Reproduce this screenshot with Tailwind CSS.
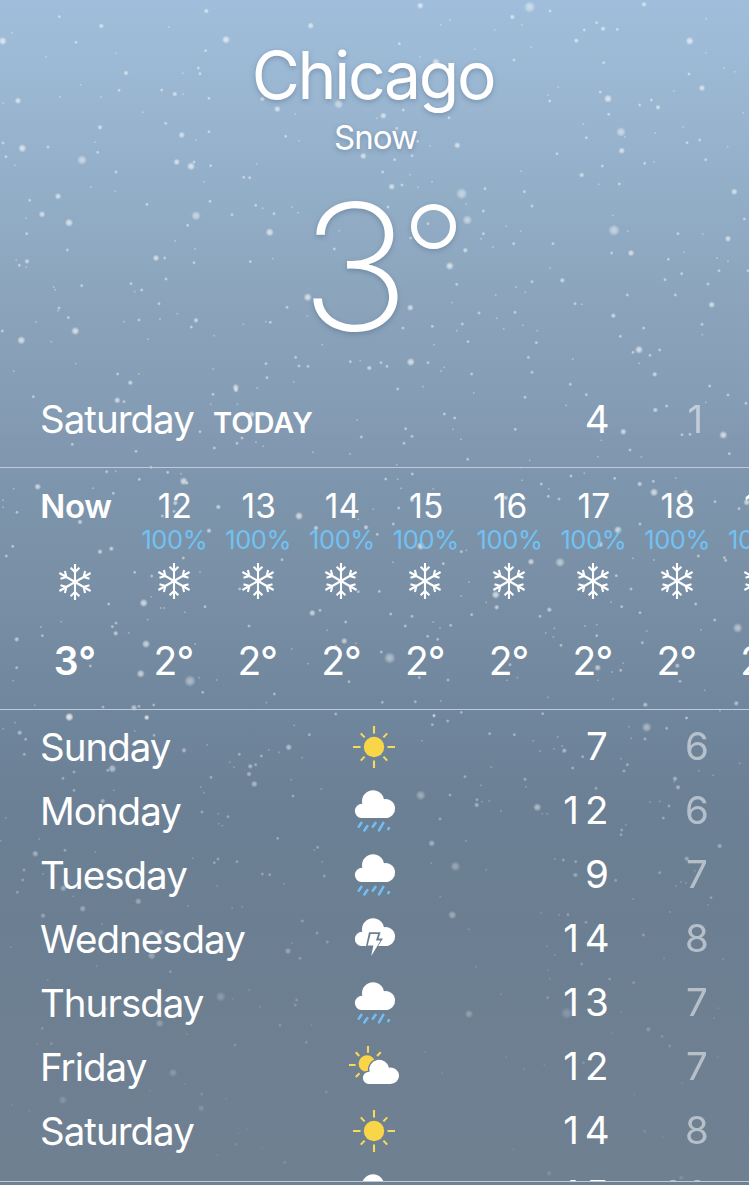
<!DOCTYPE html>
<html lang="en">
<head>
<meta charset="utf-8">
<title>Chicago Weather</title>
<script src="https://cdn.jsdelivr.net/npm/@tailwindcss/browser@4"></script>
</head>
<body>
<svg width="0" height="0" class="absolute">
  <defs>
    <radialGradient id="glow"><stop offset="0" stop-color="#fff"/><stop offset=".45" stop-color="#fff" stop-opacity=".75"/><stop offset="1" stop-color="#fff" stop-opacity="0"/></radialGradient>
    <path id="cloud" d="M6.6 28A6.9 6.9 0 0 1 7.3 13.8A11.05 11.05 0 1 1 28.9 9.15A9.5 9.5 0 1 1 30.6 28Z"/>
    <g id="arm"><path d="M0 0V-18M-4.4 -14.2L0 -10L4.4 -14.2"/></g>
    <symbol id="snow" viewBox="-20 -20 40 40"><g fill="none" stroke="#fff" stroke-width="2.1">
      <use href="#arm"/><use href="#arm" transform="rotate(60)"/><use href="#arm" transform="rotate(120)"/><use href="#arm" transform="rotate(180)"/><use href="#arm" transform="rotate(240)"/><use href="#arm" transform="rotate(300)"/></g></symbol>
    <symbol id="sun" viewBox="-30 -32 60 64"><circle r="10.2" fill="#f8d648"/>
      <path stroke="#f8d95e" stroke-width="2.1" d="M0-21V-13.5M0 21V13.5M-21 0H-13.5M21 0H13.5M-13.2-13.6L-9.4-9.6M13.2-13.6L9.4-9.6M-13.2 13.6L-9.4 9.6M13.2 13.6L9.4 9.6"/></symbol>
    <symbol id="rain" viewBox="-11 -11 60 64"><use href="#cloud" fill="#fff"/>
      <path stroke="#72bdf2" stroke-width="2.6" stroke-linecap="round" d="M6.4 32.8L3.7 36.7M12.4 36L9.3 40.5M20.5 32.8L17.8 36.7M28.3 32.8L24 40.3M34 38L33.3 39.2"/></symbol>
    <symbol id="thunder" viewBox="-11 -11 60 64">
      <mask id="boltcut" maskUnits="userSpaceOnUse" x="0" y="0" width="45" height="45"><rect width="45" height="45" fill="#fff"/><path d="M14 14.3H25.6L23.6 20.6H28L16.5 38L17.8 29H10.8Z" fill="#000"/></mask>
      <use href="#cloud" fill="#fff" mask="url(#boltcut)"/><path fill="#fff" d="M15.6 16.1H23L21 22.4H25.6L16.2 38L18.4 27.6H12.7Z"/></symbol>
    <symbol id="partly" viewBox="-11 -19 60 64">
      <mask id="cloudcut" maskUnits="userSpaceOnUse" x="-11" y="-21" width="60" height="66"><rect x="-11" y="-21" width="60" height="66" fill="#fff"/><use href="#cloud" transform="translate(8 5.7) scale(.9 .87)" fill="#000" stroke="#000" stroke-width="3"/></mask>
      <g mask="url(#cloudcut)"><circle cx="12" cy="9.6" r="8.4" fill="#f8d648"/><path stroke="#f8d95e" stroke-width="2.1" d="M13-8V-1.3M.8-1.8L4.2 2M25.8-1.8L22 2M-6 11H.6M.8 23L4.5 19.3"/></g>
      <use href="#cloud" transform="translate(8 5.7) scale(.9 .87)" fill="#fff"/></symbol>
  </defs>
</svg>

<main class="relative h-[1185px] w-[749px] overflow-hidden bg-[linear-gradient(180deg,#a0bedb_0px,#99b5d0_110px,#92adc6_200px,#8da7bf_270px,#88a0b8_350px,#859eb5_395px,#8298b0_440px,#7e96ad_480px,#788fa5_590px,#70869c_710px,#6b8095_800px,#6c7f92_920px,#6f8091_1185px)] font-['Inter','Noto_Sans',sans-serif] text-white">
  <svg id="snowfall" class="absolute inset-0" width="749" height="1185" aria-hidden="true"></svg>

  <div class="relative flex h-full flex-col">
    <header class="flex h-[371px] flex-col items-center pt-[35px] [text-shadow:0_2px_5px_rgba(60,80,110,.35)]">
      <h1 class="h-20 pr-[3px] text-[66px] leading-[80px] tracking-[-2.3px]">Chicago</h1>
      <p class="mt-[2px] h-10 pl-[2px] text-[33px] leading-10 tracking-[-1px]">Snow</p>
      <div class="mt-[8px] flex h-[200px] items-start pl-[10px] font-[230]">
        <span class="scale-x-[1.06] text-[175px] leading-[202px]">3</span>
        <span class="mt-[39px] ml-[5px] size-[45px] rounded-full border-[6px] border-white shadow-[0_2px_5px_rgba(60,80,110,.3)]"></span>
      </div>
    </header>

    <section class="flex h-24 items-center px-10 pt-[2px] text-[38.5px]">
      <span class="w-[173px] tracking-[-1px]">Saturday</span>
      <span class="pt-[6px] text-[29px] font-semibold">TODAY</span>
      <span class="ml-auto flex w-20 justify-end"><span class="w-[24.3px] text-center">4</span></span>
      <span class="flex w-[100px] justify-end opacity-50"><span class="w-[24.3px] pr-[3px] text-center">1</span></span>
    </section>

    <section id="hours" class="flex h-[243px] overflow-hidden border-y border-[#bccbdb]"></section>
    <section id="days" class="h-[471px] overflow-hidden pt-[5px]"></section>
    <div class="h-px bg-[#bccbdb]"></div>
  </div>
</main>

<script>
  const icon = (name, cls) => `<svg class="${cls}"><use href="#${name}"/></svg>`;

  document.getElementById('hours').innerHTML =
    `<div class="ml-[25px] flex w-[100px] shrink-0 flex-col items-center font-semibold">
       <span class="mt-[18px] h-[39px] pl-[2px] text-[33px] leading-10 tracking-[-0.3px]">Now</span><span class="h-[30px]"></span>
       ${icon('snow', 'mt-[7px] size-10')}<span class="mt-[39px] h-10 text-[39px] leading-10">3°</span></div>` +
    [12, 13, 14, 15, 16, 17, 18, 19].map((h, i) =>
    `<div class="flex w-[83.8px] shrink-0 flex-col items-center ${i ? '' : 'ml-[7px]'}">
       <span class="mt-[18px] h-[39px] pl-[2px] text-[33.5px] leading-10">${h}</span>
       <span class="h-[30px] pl-px text-[25.5px] leading-[30px] tracking-[-0.4px] text-[#72c1f3]">100%</span>
       ${icon('snow', 'mt-[6px] size-10')}<span class="mt-[40px] h-10 pr-px text-[39px] leading-10 tracking-[-1px]">2°</span></div>`).join('');

  /* Two-digit temperatures line up in equal digit cells. */
  const digits = n => [...String(n)].map(d =>
    `<span class="${d === '1' ? 'w-[24.3px] pr-[3px] text-center' : 'w-[24.3px] text-center'}">${d}</span>`).join('');

  document.getElementById('days').innerHTML = [
    ['Sunday', 'sun', 7, 6], ['Monday', 'rain', 12, 6], ['Tuesday', 'rain', 9, 7], ['Wednesday', 'thunder', 14, 8],
    ['Thursday', 'rain', 13, 7], ['Friday', 'partly', 12, 7], ['Saturday', 'sun', 14, 8], ['Sunday', 'rain', 15, 11]
  ].map(([day, ic, hi, lo]) =>
    `<div class="flex h-16 items-center px-10 text-[38.5px]">
       <span class="w-[304px] pt-[2px] tracking-[-1px]">${day}</span>${icon(ic, 'h-16 w-[60px]')}
       <span class="ml-auto flex w-20 justify-end">${digits(hi)}</span>
       <span class="flex w-[100px] justify-end opacity-50">${digits(lo)}</span></div>`).join('');

  /* Flakes by region: origin, then x y size triplets in thirds of a pixel. */
  const regions = [
    [0, 0, `178 50 2 304 78 3 8 123 5 36 99 1 228 127 2 138 170 1 347 160 1 378 219 3 506 81 1 619 33 3 678 119 5 932 77 4 617 152 2 595 204 2 600 221 2 548 220 1 485 270 2 524 282 3 549 283 1 357 271 2 303 291 1 242 254 1 180 291 1 54 302 4 10 310 1 627 295 2 787 297 3 832 327 4 1016 312 6 886 342 1 429 337 1 497 370 2 300 382 3 545 405 4 627 395 2 589 420 1 857 409 2 897 422 1 67 445 5 9 429 2 144 441 2 18 470 2 44 496 1 285 427 1 293 457 2 246 480 6 348 516 2 530 486 4 573 499 5 582 486 2 632 497 2 771 491 1 731 532 2 749 533 2 1090 468 4 612 545 1 346 574 1 273 561 1 174 589 4 89 601 2 126 643 4 78 655 1 207 668 5 441 613 2 630 604 2 588 647 6 563 676 2 696 644 2 767 616 2 788 625 1 822 641 2 877 621 1 894 638 1 809 697 5 80 701 2 202 750 2 81 784 3 58 796 2 79 801 1 49 781 1 468 774 4 494 774 2 585 747 1 582 788 2 526 723 1 751 785 2 818 776 1 1003 747 2 1018 692 1 393 851 2 245 857 2 161 861 1 166 869 1 425 870 2 404 875 1 498 837 2 477 911 2 532 941 1 480 957 1 417 960 2 372 965 1 588 961 3 574 981 2 643 1007 1 444 1018 1 177 924 2 174 932 1 205 953 2 226 993 5 108 966 1 7 993 2 64 1021 5 154 1025 1 923 892 5 861 922 2 922 948 1 811 967 2 797 965 1 730 973 1 227 1091 1 41 1114 1 353 1122 2 391 1148 3 416 1122 1 640 1107 1 707 1162 4 798 1091 2 801 1133 2 887 1072 2 897 1098 2 924 1099 2 881 1146 1 1051 1085 2 1081 1082 1 1108 1104 3 772 1164 1 967 1034 1`],
    [374, 0, `139 17 4 467 21 7 415 51 3 528 33 2 227 61 1 200 74 1 362 89 1 443 74 1 76 131 2 810 13 3 668 68 2 631 90 2 687 86 3 730 88 2 996 56 1 607 122 3 472 142 1 947 123 5 302 148 1 186 187 5 139 171 1 420 180 2 689 188 2 995 158 1 1049 204 1 1082 215 1 945 222 2 984 264 4 553 262 1 521 285 1 527 303 2 679 276 2 702 296 5 832 300 2 797 315 2 852 322 3 704 343 2 899 273 1 1107 338 1 28 347 4 88 330 2 8 355 1 225 353 2 68 385 2 741 396 6 753 410 1 637 413 2 743 452 4 628 372 1 928 381 1 977 420 2 939 428 2 844 399 1 1061 440 1 995 479 2 250 436 4 131 424 2 168 437 1 114 467 2 62 479 2 549 461 2 685 498 2 812 490 2 840 485 1 26 516 2 108 524 1 53 560 4 84 555 2 174 545 1 132 562 1 263 581 7 333 566 2 451 575 2 441 514 1 623 525 3 736 552 2 674 553 1 1081 575 4 277 612 1 280 660 6 474 618 2 328 633 2 162 671 2 42 621 2 328 701 2 321 716 1 110 714 2 397 679 1 440 694 1 716 646 1 1111 657 2 720 691 7 761 694 1 912 701 2 986 702 1 1062 716 4 771 759 4 713 759 2 419 731 2 537 731 2 357 741 1 274 751 3 227 798 5 248 853 2 528 804 1 565 841 3 474 845 2 426 861 1 454 877 1 365 885 1 883 778 2 930 757 1 1029 774 1 1062 784 1 1035 812 2 1122 812 2 873 839 2 923 821 2 1002 852 2 760 885 2 904 885 2 1013 914 4 603 911 2 624 913 1 315 939 2 109 923 4 423 937 2 233 908 1 368 955 1 265 972 2 718 947 3 175 979 2 248 992 1 87 984 2 447 976 1 490 992 1 389 986 1 487 1028 2 739 1009 2 809 984 2 984 973 2 985 1004 1 282 1025 2 180 1034 1 795 1049 5 777 1057 2 828 1066 2 857 1050 2 795 1090 1 463 1072 2 596 1077 1 110 1086 5 162 1088 2 21 1088 2 39 1099 2 201 1113 1 211 1102 1 293 1122 2 474 1117 2 842 1123 3 1007 1158 2 589 1153 2 147 1160 1 71 1167 2`],
    [0, 390, `100 20 2 352 31 4 372 35 2 639 13 2 708 0 3 712 43 1 632 43 1 755 73 4 726 144 2 711 160 2 768 156 1 789 169 1 643 174 2 600 125 2 1084 141 2 1072 90 1 1050 192 1 939 187 1 217 163 2 408 184 2 453 232 2 503 247 2 347 244 1 320 245 2 543 251 1 418 268 2 551 274 5 561 279 2 279 295 1 41 296 1 340 310 2 113 290 4 9 331 1 9 352 1 51 367 2 240 396 3 655 351 3 526 339 3 487 378 2 522 364 2 897 378 5 1098 412 3 1075 388 1 1120 358 1 948 414 3 627 422 3 38 469 2 19 498 2 300 485 3 334 476 3 846 509 2 550 504 2 404 547 2 455 558 2 326 642 2 600 547 1 719 597 2 1075 605 2 431 639 5 454 620 1 615 650 2 482 654 1 492 654 1 555 667 1 443 689 1 184 695 1 937 669 4 960 661 2 1037 696 2 747 708 2 982 721 1 348 699 2 337 710 2 347 730 3 386 729 1 123 711 1 127 737 2 50 748 3 50 833 2 40 872 1 438 762 5 586 762 1 1033 753 4 1008 768 2 1068 760 1 792 784 3 271 828 2 422 851 5 570 873 7 650 870 1 598 863 1 608 907 2 924 821 1 875 777 1 1047 875 2 823 912 2 799 938 1 309 951 2 402 953 4 417 949 2 461 945 2 104 946 1 208 980 5 440 982 3 1007 972 2`],
    [374, 390, `299 9 1 453 22 2 637 14 2 1062 15 2 577 46 1 844 60 3 878 48 2 995 37 1 211 72 2 242 84 2 95 116 2 114 139 2 90 160 2 237 118 1 261 148 1 424 118 2 281 208 2 467 211 1 748 125 4 682 151 1 768 180 2 802 201 1 672 200 1 924 134 2 948 133 2 1048 135 5 1066 191 2 1116 40 2 68 224 1 441 233 1 115 252 2 35 267 2 71 268 1 81 295 1 591 258 2 631 250 1 722 265 2 444 271 1 502 282 2 524 297 1 523 319 2 555 327 2 797 282 3 838 274 2 840 307 5 905 264 1 935 306 3 1023 335 2 1095 356 2 1118 337 4 178 297 1 395 323 3 114 330 3 74 354 2 58 402 2 10 433 2 140 468 5 262 485 2 277 481 1 732 420 5 798 402 2 678 463 4 471 515 4 558 517 6 208 521 2 57 517 1 777 505 1 840 510 1 973 498 2 1051 503 2 1055 511 2 16 604 2 50 672 2 114 679 2 94 708 2 178 696 1 198 713 1 230 706 2 293 674 2 262 618 1 285 577 1 727 557 2 771 597 2 711 637 1 743 650 2 965 642 2 798 668 2 1022 690 2 1091 714 6 981 719 1 365 614 5 368 652 3 337 637 1 526 659 3 498 679 2 515 729 1 541 715 1 538 741 1 561 766 2 633 708 1 668 704 1 668 737 2 805 758 2 818 723 1 161 739 2 191 748 2 47 804 7 22 786 2 136 863 2 222 870 2 671 833 4 714 846 1 740 841 2 748 820 1 408 824 2 430 863 1 672 871 1 910 827 3 918 874 2 399 871 1 992 901 1 522 922 1 717 927 1 814 944 3 1087 940 3 25 937 2 124 935 2 180 976 2 262 967 2 506 971 2 200 933 1 1038 962 1 937 984 2`],
    [0, 715, `59 53 3 77 73 2 73 118 2 10 41 1 45 23 1 208 7 5 440 8 3 404 48 1 462 61 2 552 106 3 337 161 5 323 166 2 222 171 2 189 190 2 222 226 2 341 226 1 308 258 3 622 89 1 718 118 2 784 123 2 806 105 1 837 112 1 866 97 4 928 59 2 907 128 1 883 31 1 689 142 1 702 157 1 751 154 3 767 149 2 747 177 3 763 207 4 633 187 2 602 216 1 611 233 1 606 291 2 655 296 1 684 305 2 656 326 1 667 332 1 873 194 1 879 243 2 964 222 1 17 309 1 2 377 1 118 372 1 106 416 4 195 406 2 286 411 1 72 465 2 68 495 2 52 532 2 129 477 1 833 370 2 953 397 2 943 405 1 967 440 1 973 483 2 578 430 1 654 432 2 643 443 2 711 440 2 787 477 2 809 479 2 652 513 1 852 506 1 190 520 4 220 544 1 248 581 4 415 559 4 564 572 1 697 579 1 726 575 1 129 602 3 306 626 1 482 652 4 272 705 4 455 722 5 511 770 2 290 754 1 143 795 1 32 697 1 907 618 2 951 654 2 982 681 2 864 708 4 900 730 2 876 685 1 747 826 1 662 845 6 698 851 1 890 855 2 886 870 2 780 875 1 319 881 2 479 925 5 127 940 2 154 986 2 112 987 1 561 957 1 934 930 1 840 931 2 919 982 2 705 990 2 519 1073 5 556 1107 1 449 1127 1 605 1137 2 604 1180 4 678 1151 1 979 1131 2 188 1155 5 36 1170 1 88 1188 1 713 1255 1 741 1243 1 709 1288 2 787 1298 1 652 1320 1 854 1342 2`],
    [420, 715, `42 3 2 37 29 2 83 18 2 6 77 1 209 56 2 283 59 2 340 77 1 413 66 1 360 108 1 426 93 1 433 107 3 402 101 1 488 125 2 458 159 2 214 156 1 135 185 2 183 211 1 315 193 2 318 215 1 680 37 6 627 35 1 740 40 2 801 8 1 634 70 1 675 72 2 603 131 1 622 149 2 612 168 2 837 167 1 880 181 1 959 145 1 765 191 3 774 217 3 763 200 1 2 241 6 90 240 2 171 254 2 170 270 3 186 260 1 208 258 1 243 288 1 352 277 5 367 296 1 382 296 1 60 312 2 528 220 2 690 261 1 719 259 1 747 273 2 730 309 2 617 329 1 605 345 2 603 359 2 35 385 4 34 445 1 106 454 6 138 378 1 199 464 1 61 545 1 405 432 1 430 435 2 467 440 2 466 480 3 587 496 2 899 393 3 800 431 3 719 473 2 824 467 1 783 501 1 798 504 1 768 512 1 873 548 2 863 570 1 640 552 1 750 591 1 97 600 5 146 643 1 417 599 1 444 599 2 498 622 2 364 594 1 381 694 1 404 720 1 485 747 2 383 766 1 389 791 1 569 792 2 641 803 2 670 660 2 732 730 1 909 732 1 168 755 1 243 837 1 383 848 2 147 897 5 440 895 7 603 890 1 685 943 3 726 964 2 749 993 2 895 880 1 882 909 1 575 955 1 14 1012 1 67 1075 1 373 1050 1 490 1043 2 312 1062 1 259 1026 1 893 1026 1 787 1105 1 643 1139 1 674 1249 2 729 1266 1 279 1303 1 387 1375 3 784 1388 3`]
  ];
  const radius = [0, 1.4, 2, 2.8, 3.5, 4.3, 5.1, 6], alpha = [0, .36, .54, .6, .64, .68, .52, .5];
  let out = '';
  for (const [ox, oy, s] of regions) {
    const v = s.split(' ').map(Number);
    for (let i = 0; i < v.length; i += 3) {
      const y = oy + v[i + 1] / 3, fade = y < 600 ? 1 : Math.max(.25, 1 - (y - 600) / 700);
      out += `<circle cx="${(ox + v[i] / 3).toFixed(1)}" cy="${y.toFixed(1)}" r="${radius[v[i + 2]]}" fill="url(#glow)" opacity="${(alpha[v[i + 2]] * fade).toFixed(2)}"/>`;
    }
  }
  document.getElementById('snowfall').innerHTML = out;
</script>
</body>
</html>
